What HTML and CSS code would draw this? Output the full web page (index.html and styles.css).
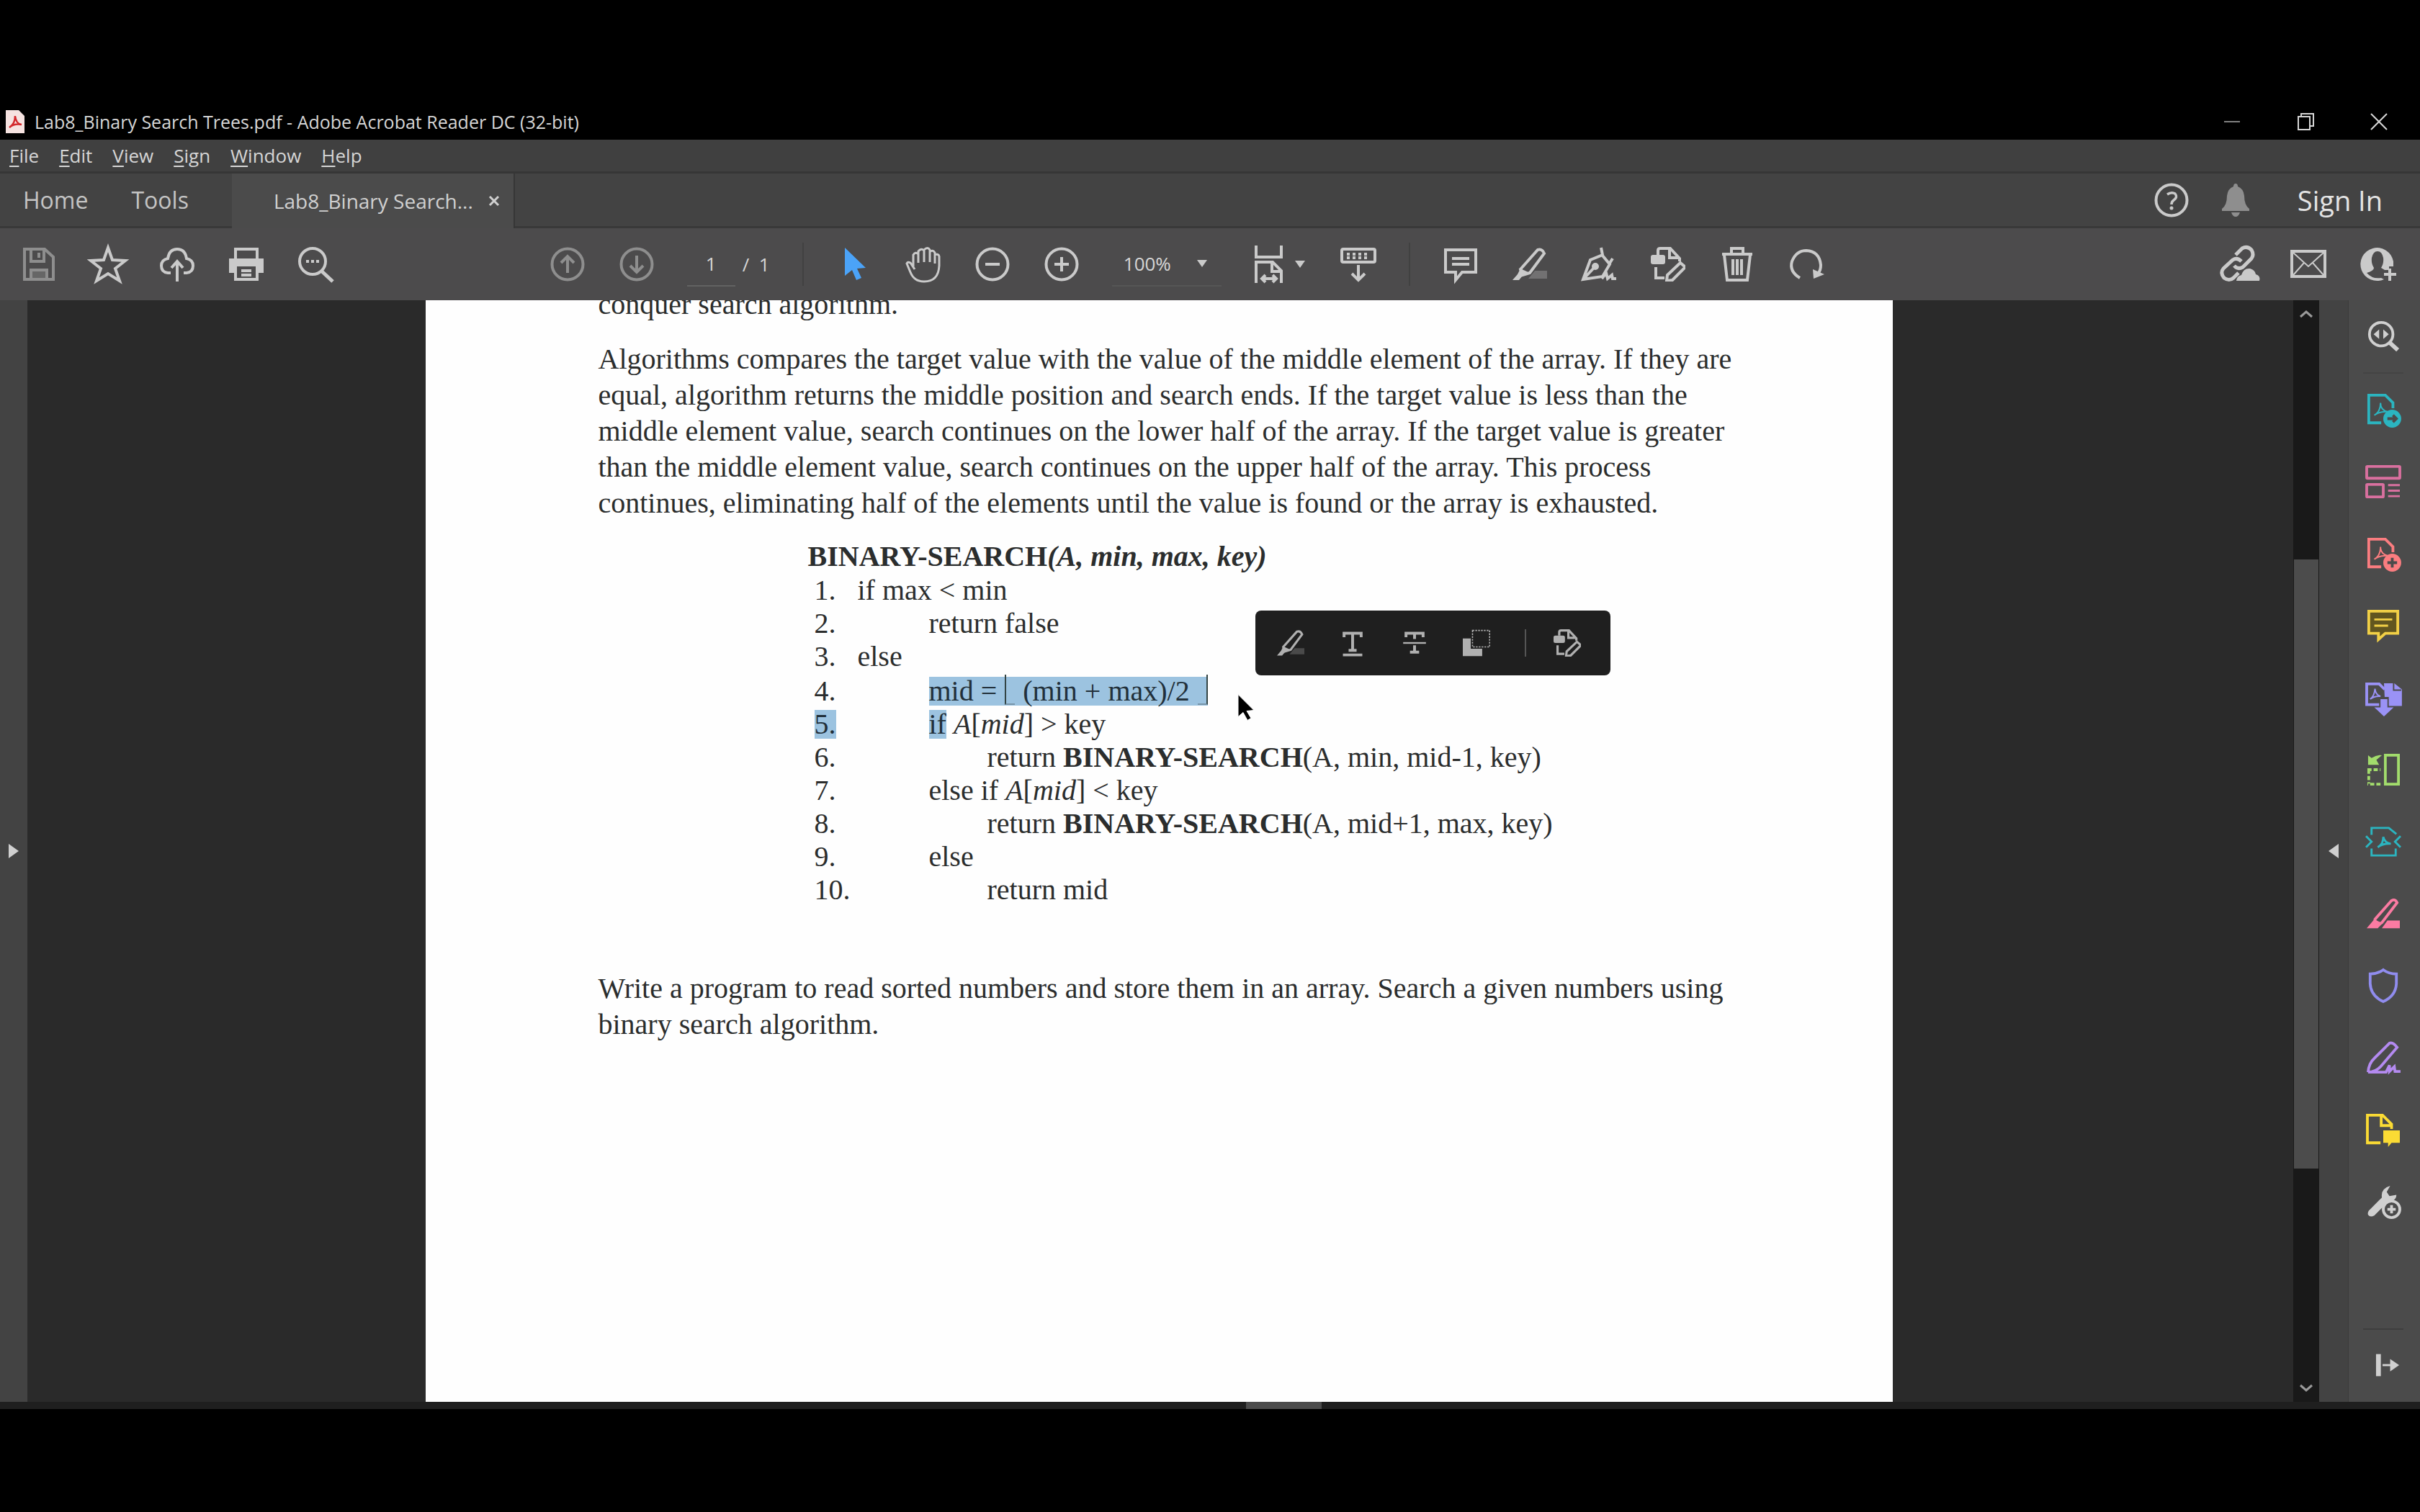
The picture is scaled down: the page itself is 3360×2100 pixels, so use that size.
FILE: index.html
```html
<!DOCTYPE html>
<html lang="en">
<head>
<meta charset="utf-8">
<title>Lab8_Binary Search Trees.pdf - Adobe Acrobat Reader DC (32-bit)</title>
<link rel="stylesheet" href="styles.css">
</head>
<body>
<svg class="defs" width="0" height="0" aria-hidden="true">
  <symbol id="i-highlight" viewBox="0 0 48 48">
    <path d="M22 44h26v-11H31z" fill="currentColor" stroke="none" opacity=".3"/>
    <path d="M11 31 35 4q6-2 9 5L24 36l-10 3z"/><path d="M11 30 24 36 14 40 9 46 0 46 7 38z" fill="currentColor" stroke="none"/>
  </symbol>
  <symbol id="i-editpdf" viewBox="0 0 48 48">
    <path d="M10 11V5q0-3 3-3h14l13 14v4M26 3v12h12"/><rect x="0" y="11" width="20" height="13" rx="3" fill="currentColor" stroke="none"/>
    <path d="M7 28v15h12M41 22l7 6-18 18-8 1 1-8z"/>
  </symbol>
</svg>
<div class="app">
  <header class="titlebar">
    <svg class="pdf-icon" viewBox="0 0 26 32"><path d="M0 0h18l8 8v24H0z" fill="#f6e3e1"/><path d="M5 24q8-5 8-16 1 11 9 12-10-2-17 4z" fill="none" stroke="#d3282c" stroke-width="2.5"/></svg>
    <h1 class="title">Lab8_Binary Search Trees.pdf - Adobe Acrobat Reader DC (32-bit)</h1>
    <div class="window-controls">
      <button aria-label="Minimize"><svg viewBox="0 0 24 24"><path d="M1 12h22" opacity=".6"/></svg></button>
      <button aria-label="Restore"><svg viewBox="0 0 24 24"><path d="M2 5h16v18H2zM6 4V1h17v17h-4"/></svg></button>
      <button aria-label="Close"><svg viewBox="0 0 24 24"><path d="m1 1 22 22M23 1 1 23"/></svg></button>
    </div>
  </header>
  <nav class="menubar">
    <button><u>F</u>ile</button><button><u>E</u>dit</button><button><u>V</u>iew</button><button><u>S</u>ign</button><button><u>W</u>indow</button><button><u>H</u>elp</button>
  </nav>
  <div class="tabs">
    <button class="tab tab-home">Home</button>
    <button class="tab tab-tools">Tools</button>
    <div class="tab-active"><span>Lab8_Binary Search...</span><button aria-label="Close tab"><svg viewBox="0 0 14 14"><path d="m1 1 12 12M13 1 1 13"/></svg></button></div>
    <div class="account">
      <button class="icon" aria-label="Help"><svg viewBox="0 0 48 48"><circle cx="24" cy="24" r="21.500"/><path d="M18 16q6-4 11-1 4 5-2 9-3 2-3 6" stroke-width="3.500"/><circle cx="24" cy="35" r="2.500" fill="currentColor" stroke="none"/></svg></button>
      <button class="icon dim" aria-label="Notifications"><svg viewBox="0 0 48 48"><path d="M24 1q3 0 3 4 8 3 9 13 0 13 7 18v3H5v-3q7-5 7-18 1-10 9-13 0-4 3-4zM18 41h12q-2 6-6 6t-6-6z" fill="currentColor" stroke="none"/></svg></button>
      <button class="signin">Sign In</button>
    </div>
  </div>
  <div class="toolbar">
    <div class="group">
      <button class="icon dim" aria-label="Save"><svg viewBox="0 0 48 48"><path d="M4 3h28l12 11v31H4zM13 4v16h18V4M24 8v7M13 44V32h22v12"/><path d="M14 32h20v12H14z" fill="currentColor" opacity=".4" stroke="none"/></svg></button>
      <button class="icon" aria-label="Star"><svg viewBox="0 0 48 48"><path d="m24 1 6 17 18 1-14 11 6 17-16-10L8 47l6-17L0 19l18-1z"/></svg></button>
      <button class="icon" aria-label="Upload"><svg viewBox="0 0 48 48"><path d="M15 36H11Q2 35 2 26q0-8 9-10Q13 3 24 3t13 13q9 2 9 10 0 9-9 10h-4M24 48V21M16 29l8-9 8 9"/></svg></button>
      <button class="icon" aria-label="Print"><svg viewBox="0 0 48 48"><path d="M9 16V3h30v13"/><path d="M0 16h48v20h-8V27H8v9H0z" fill="currentColor" stroke="none"/><path d="M9 27v18h30V27M17 33h14M17 39h14"/></svg></button>
      <button class="icon" aria-label="Find"><svg viewBox="0 0 48 48"><circle cx="20" cy="20" r="18"/><path d="m32 33 16 15" stroke-width="5"/><path d="M11 20h4m3 0h4m3 0h4" stroke-width="4"/></svg></button>
    </div>
    <div class="group center">
      <div class="group">
        <button class="icon dim" aria-label="Previous page"><svg viewBox="0 0 48 48"><circle cx="24" cy="24" r="21.500"/><path d="M24 36V13M15 22l9-9 9 9"/></svg></button>
        <button class="icon dim" aria-label="Next page"><svg viewBox="0 0 48 48"><circle cx="24" cy="24" r="21.500"/><path d="M24 12v23M15 26l9 9 9-9"/></svg></button>
      </div>
      <div class="pager"><input aria-label="Page number" value="1"><span>/&nbsp; 1</span></div>
      <i class="rule"></i>
      <div class="group">
        <button class="icon pick" aria-label="Select"><svg viewBox="0 0 48 48"><path d="M11 1v39l10-8 6 14 7-3-6-13 12-1z" fill="currentColor" stroke="none"/></svg></button>
        <button class="icon" aria-label="Hand"><svg viewBox="0 0 48 48"><path d="M12 31 6 22q-4-2-5 1l5 12q5 13 19 13 20 0 21-22V13q-1-4-6-2v12M40 23V8q-3-5-7-1v14M33 21V4q-3-5-8 0v17M25 21V5q-4-4-8 1v16M17 22V10q-4-4-7 1v18" stroke-width="3"/></svg></button>
        <button class="icon" aria-label="Zoom out"><svg viewBox="0 0 48 48"><circle cx="24" cy="24" r="21.500"/><path d="M14 24h20"/></svg></button>
        <button class="icon" aria-label="Zoom in"><svg viewBox="0 0 48 48"><circle cx="24" cy="24" r="21.500"/><path d="M14 24h20M24 14v20"/></svg></button>
      </div>
      <div class="zoom"><select aria-label="Zoom level"><option>100%</option></select><svg class="caret" viewBox="0 0 14 10"><path d="M0 0h14L7 10z"/></svg></div>
      <button class="fit" aria-label="Fit width"><svg class="fit-icon" viewBox="0 0 40 52"><path d="M2 0v16h35V0M2 52V23h23l12 12v17M24 24v12h12M10 46h20M15 41l-5 5 5 5M25 41l5 5-5 5"/></svg><svg class="caret" viewBox="0 0 14 10"><path d="M0 0h14L7 10z"/></svg></button>
      <button class="icon read" aria-label="Read mode"><svg viewBox="0 0 48 48"><rect x="1" y="3" width="46" height="18" rx="2"/><path d="M8 10h32M8 15h32" stroke-dasharray="4 4"/><path d="M24 25v20M15 37l9 9 9-9"/></svg></button>
      <i class="rule"></i>
      <div class="group">
        <button class="icon" aria-label="Comment"><svg viewBox="0 0 48 48"><path d="M3 4h42v31H26l-9 11V35H3z"/><path d="M12 16h24M12 24h24"/></svg></button>
        <button class="icon" aria-label="Highlight"><svg><use href="#i-highlight"/></svg></button>
        <button class="icon" aria-label="Sign"><svg viewBox="0 0 48 48"><path d="m27 1 2 10-17 7L2 45l27-4 10-17-10-12M38 24l5-8M3 44l15-16M28 44l6-8 2 8 6-5 1 5h5"/><circle cx="19" cy="27" r="3" fill="currentColor"/></svg></button>
        <button class="icon" aria-label="Edit PDF"><svg><use href="#i-editpdf"/></svg></button>
        <button class="icon" aria-label="Delete"><svg viewBox="0 0 48 48"><path d="M3 10h42M16 9V2h16v7M6 11l4 35h28l4-35M18 17v22M24 17v22M30 17v22"/></svg></button>
        <button class="icon" aria-label="Rotate"><svg viewBox="0 0 48 48"><path d="M15 43Q0 34 4 20 10 5 24 5q18 1 20 20 0 8-4 12" stroke-width="4"/><path d="m33 31 16 7-15 6z" fill="currentColor" stroke="none"/></svg></button>
      </div>
    </div>
    <div class="group share">
      <button class="icon" aria-label="Share link"><svg viewBox="0 0 48 48"><path d="m19 11 9-9q7-4 13 2 4 7 0 12L29 28q-7 4-12-2M27 20q-6-6-12-2L2 30q-5 6 1 13 7 5 13 0l7-7" stroke-width="5"/><path d="M20 47q1-7 7-8 3-10 12-9 7 2 8 8 7 2 5 9z" fill="currentColor" stroke="none"/></svg></button>
      <button class="icon" aria-label="Email"><svg viewBox="0 0 48 48"><rect x="1" y="6" width="46" height="35"/><path d="m3 8 21 19L45 8M3 39l15-17M45 39 30 22" stroke-width="2"/></svg></button>
      <button class="icon" aria-label="Invite people"><svg viewBox="0 0 48 48"><path d="M33 45A23 23 0 1 1 46 20v7h-6v5h-6l-5-3q4-6 3-14-2-9-8-9t-8 9q-1 8 3 14 0 4-10 7 8 9 20 7z" fill="currentColor" stroke="none"/><path d="M41 30v17M33 38h17" stroke-width="4"/></svg></button>
    </div>
  </div>
  <div class="workspace">
    <div class="leftbar"><button aria-label="Open navigation pane"><svg class="arrow" viewBox="0 0 14 20"><path d="M0 0v20l14-10z"/></svg></button></div>
    <main class="canvas">
      <article class="page">
        <p>conquer search algorithm.</p>
        <p>Algorithms compares the target value with the value of the middle element of the array. If they are equal, algorithm returns the middle position and search ends. If the target value is less than the middle element value, search continues on the lower half of the array. If the target value is greater than the middle element value, search continues on the upper half of the array. This process continues, eliminating half of the elements until the value is found or the array is exhausted.</p>
        <section class="algorithm">
          <h2>BINARY-SEARCH<em>(A, min, max, key)</em></h2>
          <ol>
            <li><span class="num">1.</span><span>if max &lt; min</span></li>
            <li><span class="num">2.</span><span class="in1">return false</span></li>
            <li><span class="num">3.</span><span>else</span></li>
            <li class="tall"><span class="num">4.</span><span class="in1"><mark>mid =<span class="floor left"></span>(min + max)/2<span class="floor right"></span></mark></span></li>
            <li><span class="num"><mark>5.</mark></span><span class="in1"><mark>if</mark> <em>A</em>[<em>mid</em>] &gt; key</span></li>
            <li><span class="num">6.</span><span class="in2">return <b>BINARY-SEARCH</b>(A, min, mid-1, key)</span></li>
            <li><span class="num">7.</span><span class="in1">else if <em>A</em>[<em>mid</em>] &lt; key</span></li>
            <li><span class="num">8.</span><span class="in2">return <b>BINARY-SEARCH</b>(A, mid+1, max, key)</span></li>
            <li><span class="num">9.</span><span class="in1">else</span></li>
            <li><span class="num">10.</span><span class="in2">return mid</span></li>
          </ol>
        </section>
        <p>Write a program to read sorted numbers and store them in an array. Search a given numbers using binary search algorithm.</p>
        <div class="popup">
          <button aria-label="Highlight text"><svg><use href="#i-highlight"/></svg></button>
          <button aria-label="Underline text"><svg viewBox="0 0 48 48"><path d="M9 14V7h30v7M24 7v32M17 37h14M7 45h34" stroke-width="5"/></svg></button>
          <button aria-label="Strikethrough text"><svg viewBox="0 0 48 48"><path d="M9 14V7h30v7M24 7v10M24 28v13M16 40h16" stroke-width="5"/><path d="M4 24h40" stroke-width="3"/></svg></button>
          <button aria-label="Copy text"><svg viewBox="0 0 48 48"><path d="M0 16h14v18h20v13H0z" fill="currentColor" stroke="none"/><rect x="17" y="2" width="30" height="29" stroke-width="2" stroke-dasharray="3 2"/></svg></button>
          <i class="rule"></i>
          <button class="edit" aria-label="Edit text"><svg><use href="#i-editpdf"/></svg></button>
        </div>
        <svg class="cursor" viewBox="0 0 22 36"><path d="M0 0v31l7-6 6 11 5-3-6-10 10-1z"/></svg>
      </article>
    </main>
    <div class="scrollbar">
      <svg class="chev" viewBox="0 0 18 10"><path d="m1 9 8-7 8 7"/></svg><i class="before"></i><i class="thumb"></i><i class="after"></i><svg class="chev" viewBox="0 0 18 10"><path d="m1 1 8 7 8-7"/></svg>
    </div>
    <div class="rightbar"><button aria-label="Open tools pane"><svg class="arrow" viewBox="0 0 14 20"><path d="M14 0v20L0 10z"/></svg></button></div>
    <aside class="tools">
      <button class="first" aria-label="Search tools"><svg viewBox="0 0 48 48"><circle cx="21" cy="21" r="17"/><path d="m33 33 12 11" stroke-width="6"/><path d="M18 14v14l-8-7zM24 14v14l8-7z" fill="currentColor" stroke="none"/></svg></button>
      <button class="teal" aria-label="Export PDF"><svg viewBox="0 0 48 48"><path d="M21 43H3V3h24l11 11v8"/><path d="M11 32q9-5 9-18 0 11 11 13-12-1-20 5" stroke-width="2"/><circle cx="37" cy="37" r="13" fill="currentColor" stroke="none"/><path d="M30 37h13M38 32l5 5-5 5" stroke="#4b4b4b"/></svg></button>
      <button class="pink" aria-label="Organize pages"><svg viewBox="0 0 48 48"><rect x="0" y="2" width="48" height="17" rx="1"/><rect x="0" y="28" width="24" height="18" rx="1"/><path d="M31 29h17M31 37h17M31 45h17" stroke-width="3"/></svg></button>
      <button class="coral" aria-label="Create PDF"><svg viewBox="0 0 48 48"><path d="M21 43H3V3h24l11 11v8"/><path d="M11 32q9-5 9-18 0 11 11 13-12-1-20 5" stroke-width="2"/><circle cx="37" cy="37" r="13" fill="currentColor" stroke="none"/><path d="M30 37h14M37 30v14" stroke="#4b4b4b"/></svg></button>
      <button class="yellow" aria-label="Comment"><svg viewBox="0 0 48 48"><path d="M3 3h42v32H27l-10 9v-9H3z" fill="#62561f"/><path d="M11 15h26M11 24h20" stroke-width="3"/></svg></button>
      <button class="violet" aria-label="Combine files"><svg viewBox="0 0 48 48"><path d="M18 34H0V4h18l8 8"/><path d="M5 26q6-4 7-15 1 9 8 11-8-1-15 4" stroke-width="2"/><path d="M25 3h15l11 9v24H32V23h-6z" fill="currentColor" stroke="none"/><path d="M20 26h10v12h9L25 51 11 38h9z" fill="currentColor" stroke="none"/><path d="M39 3v10h11" stroke="#4b4b4b" stroke-width="2"/></svg></button>
      <button class="green" aria-label="Compress pages"><svg viewBox="0 0 48 48"><rect x="27" y="3" width="19" height="42"/><path d="M1 24h19M20 45H1M3 24v20" stroke-dasharray="6 3"/><path d="m2 3 5 4q8-5 15-4l-8 7 4 7H2z" fill="currentColor" stroke="none"/></svg></button>
      <button class="teal" aria-label="Compress PDF"><svg viewBox="0 0 48 48"><path d="M7 14V4h25l11 9M7 34v10h35V34M16 32q8-4 8-15 2 9 11 10-11-1-19 5M-1 16l8 8-8 8M49 16l-8 8 8 8" stroke-width="3"/></svg></button>
      <button class="rose" aria-label="Redact"><svg viewBox="0 0 48 48"><path d="M12 32 36 5q5-3 8 3L22 37l-10 4z"/><path d="M0 45 11 32l12 6-7 7zM22 45l8-11h18v11z" fill="currentColor" stroke="none"/></svg></button>
      <button class="indigo" aria-label="Protect"><svg viewBox="0 0 48 48"><path d="M24 1q8 6 19 6v14q-1 18-19 26Q6 39 5 21V7q11 0 19-6z"/></svg></button>
      <button class="purple" aria-label="Fill and sign"><svg viewBox="0 0 48 48"><path d="M2 45q1-13 9-20L33 3q5-2 11 6L21 36q-8 9-19 9h26l5-10v9l7-7 1 7h8"/></svg></button>
      <button class="gold" aria-label="Send for comments"><svg viewBox="0 0 48 48"><path d="M20 43H1V3h22l13 13v7M21 4v14h14"/><path d="M24 25h24v18H36l-5 6v-6h-7z" fill="currentColor" stroke="none"/></svg></button>
      <button aria-label="More tools"><svg viewBox="0 0 48 48"><path d="M3 37 22 18Q20 5 34 1l-5 9 4 6 10-2q0 9-13 11L11 44q-6 3-9-1-1-3 1-6z" fill="currentColor" stroke="none"/><circle cx="36" cy="35" r="12" fill="#4b4b4b"/><path d="M36 29v12M30 35h12"/></svg></button>
      <button class="last" aria-label="Collapse tools"><svg viewBox="0 0 48 48"><path d="M17 8v32" stroke-width="7"/><path d="M23 24h16" stroke-width="3"/><path d="M34 15v18l13-9z" fill="currentColor" stroke="none"/></svg></button>
    </aside>
  </div>
  <div class="hscroll"><i></i></div>
</div>
</body>
</html>
```
FILE: styles.css
```css
* { box-sizing: border-box; }
body {
  margin: 0;
  min-height: 100vh;
  display: flex;
  background: #000;
  padding: 143px 0;
  color: #d6d6d6;
  font-family: "Open Sans", "Noto Sans", sans-serif;
}
.defs { position: absolute; }
button, input, select {
  margin: 0;
  padding: 0;
  border: 0;
  background: none;
  color: inherit;
  font: inherit;
}
svg {
  display: block;
  overflow: visible;
  fill: none;
  stroke: currentColor;
  stroke-width: 4;
}
.app { flex: 1; min-width: 0; display: flex; flex-direction: column; }

.titlebar { height: 51px; display: flex; align-items: center; padding: 0 45px 0 8px; }
.pdf-icon { width: 26px; height: 32px; margin-right: 14px; stroke: none; }
.title { flex: 1; margin: 0; font-size: 25px; font-weight: 400; line-height: 34px; }
.window-controls { display: flex; gap: 78px; }
.window-controls svg { width: 24px; height: 24px; stroke-width: 2; }

.menubar {
  height: 47px;
  display: flex;
  gap: 28px;
  padding: 0 13px;
  background: #404040;
  border-bottom: 3px solid #363636;
  font-size: 26px;
}
.menubar u { text-underline-offset: 4px; }

.tabs { height: 76px; display: flex; background: #434343; font-size: 32px; box-shadow: inset 0 -3px #393939; color: #c4c4c4; }
.tab { padding-bottom: 3px; }
.tab-home { padding-left: 32px; }
.tab-tools { padding-left: 60px; padding-right: 60px; }
.tab-active {
  width: 393px;
  display: flex;
  align-items: center;
  justify-content: space-between;
  padding: 0 20px 0 58px;
  background: #4b4b4b;
  border-right: 2px solid #363636;
  font-size: 28px;
  color: #d0d0d0;
}
.tab-active svg { width: 14px; height: 14px; stroke-width: 3; }
.account { margin-left: auto; display: flex; align-items: center; gap: 41px; padding: 0 52px 3px 0; }
.signin { margin-left: 21px; font-size: 38px; line-height: 52px; color: #e4e4e4; }

.icon, .icon svg { width: 48px; height: 48px; }
.icon { color: #cacaca; flex: none; }
.icon.dim { color: #8e8e8e; }
.icon.pick { color: #4ba3f8; }

.toolbar { height: 100px; display: flex; align-items: center; padding: 0 35px 0 30px; background: #4c4b4c; font-size: 26px; }
.group { display: flex; align-items: center; gap: 48px; }
.toolbar::before, .toolbar::after { content: ""; order: 1; }
.toolbar::before { flex: 6; }
.toolbar::after { flex: 11; order: 3; }
.center { order: 2; gap: 46px; }
.share { order: 4; }
.pager { display: flex; align-items: center; gap: 10px; width: 114px; white-space: nowrap; }
.pager input { width: 67px; height: 62px; text-align: center; border-bottom: 2px solid #626262; }
.rule { width: 2px; height: 60px; background: #414141; flex: none; }
.zoom { display: flex; align-items: center; width: 152px; height: 62px; padding-left: 16px; border-bottom: 2px solid #565656; }
.zoom select { appearance: none; width: 102px; }
.caret { width: 14px; height: 12px; fill: #cacaca; stroke: none; }
.fit { display: flex; align-items: center; gap: 16px; margin-right: 4px; color: #cacaca; }
.fit-icon { width: 40px; height: 52px; }

.workspace { flex: 1; display: flex; min-height: 0; height: 1530px; }
.leftbar, .rightbar { display: flex; justify-content: center; width: 38px; background: #434343; color: #d0d0d0; }
.rightbar { width: 41px; border-right: 1px solid #3c3c3c; }
.arrow { width: 14px; height: 20px; fill: currentColor; stroke: none; }
.canvas { flex: 1; min-width: 0; display: flex; justify-content: center; padding-right: 4px; overflow: hidden; background: #2a2a2a; }
.page {
  position: relative;
  width: 100%;
  max-width: 2037px;
  padding: 0 212px 0 240px;
  background: #fefefe;
  color: #2b2d2d;
  font: 40px/50px "Liberation Serif", serif;
}
.page p { margin: 0 0 26px; }
.page p:first-child { margin-top: -19px; }
.algorithm { margin: 0 0 89px 291px; line-height: 46px; }
.algorithm h2 { margin: 0 0 1px; font-size: 40px; line-height: 46px; }
.algorithm ol { margin: 0; padding: 0 0 0 9px; list-style: none; }
.algorithm li { display: flex; white-space: nowrap; }
.algorithm .tall { padding-top: 2px; }
.num { width: 60px; }
.in1 { padding-left: 99px; }
.in2 { padding-left: 180px; }
mark { display: inline-block; background: #9cc3e0; color: #22303a; line-height: 40px; }
.floor { display: inline-block; width: 14px; height: 42px; border-left: 2px solid #344; vertical-align: -6px; margin: -10px 11px 0 11px; border-bottom: 2px solid #7895aa; }
.floor.right { border-left: 0; border-right: 2px solid #344; margin: -10px 0 0 11px; }

.popup {
  position: absolute;
  left: 1152px;
  top: 431px;
  width: 493px;
  height: 90px;
  display: flex;
  align-items: center;
  gap: 48px;
  padding-left: 30px;
  border-radius: 8px;
  background: #1f1f1f;
  color: #b0b0b0;
}
.popup svg { width: 38px; height: 38px; }
.popup .rule { height: 38px; background: #555; margin-right: -10px; }
.cursor { position: absolute; left: 1128px; top: 547px; width: 22px; height: 37px; fill: #000; stroke: #fff; stroke-width: 1; }

.scrollbar { width: 36px; display: flex; flex-direction: column; align-items: center; background: #191919; color: #9a9a9a; }
.chev { width: 18px; height: 10px; margin: 14px 0; stroke-width: 3; }
.before { flex: 321; }
.thumb { flex: 844; width: 34px; background: #4c4c4c; }
.after { flex: 285; }

.tools { width: 99px; display: flex; flex-direction: column; align-items: center; padding: 0 3px 2px 0; background: #4b4b4b; color: #d0d0d0; }
.tools button { width: 56px; height: 100px; display: flex; align-items: center; justify-content: center; flex: none; }
.tools svg { width: 46px; height: 46px; }
.tools .first { height: 102px; border-bottom: 2px solid #444; }
.tools .last { margin-top: auto; border-top: 2px solid #3e3e3e; }
.teal { color: #2bb5c0; }
.pink { color: #d9709f; }
.coral { color: #fb7d80; }
.yellow { color: #f2d046; }
.violet { color: #9a92f6; }
.green { color: #a2dc6c; }
.rose { color: #fb7ba2; }
.indigo { color: #908cee; }
.purple { color: #b48af0; }
.gold { color: #fbdb34; }

.hscroll { height: 10px; background: #1f1f1f; display: flex; padding-left: 51.5%; }
.hscroll i { width: 105px; background: #4c4c4c; }
```
